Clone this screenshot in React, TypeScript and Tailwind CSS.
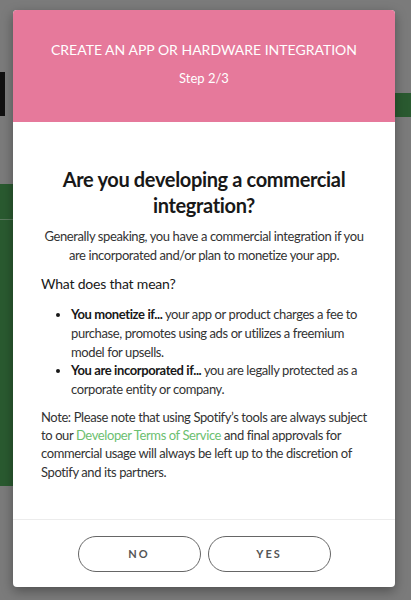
import React from 'react';

const App = () => {
  return (
    <div className="relative w-[411px] h-[600px] overflow-hidden bg-[#7b7b7b] font-['Lato',sans-serif]">
      {/* backdrop page bits */}
      <div className="absolute left-0 top-[72px] w-[5px] h-[44px] bg-[#111]" />
      <div className="absolute left-0 top-[184px] w-[14px] h-[302px] bg-[#2a5a30]">
        <div className="mt-[35px] h-px bg-[#5a7a5e]" />
      </div>
      <div className="absolute right-0 top-[93px] w-[16px] h-[24px] bg-[#2a5a30]" />

      {/* modal */}
      <div className="absolute left-[13px] top-[10px] w-[382px] bg-white rounded-[4px] overflow-hidden shadow-[0_4px_12px_rgba(0,0,0,0.35)]">
        <div className="bg-[#e6799b] text-white text-center pt-[30px] pb-[35px]">
          <div className="text-[14px] leading-[20px]">CREATE AN APP OR HARDWARE INTEGRATION</div>
          <div className="mt-[9px] text-[13px] leading-[18px]">Step 2/3</div>
        </div>

        <div className="px-[28px] pt-[44px] pb-[38px] text-[#333] tracking-[-0.4px]">
          <h2 className="text-center text-[20px] leading-[26px] font-bold tracking-[-0.35px] text-[#181818]">
            Are you developing a commercial integration?
          </h2>
          <p className="mt-[9px] text-center text-[13px] leading-[19px]">
            Generally speaking, you have a commercial integration if you are incorporated and/or plan to monetize your app.
          </p>
          <div className="mt-[9px] text-[14px] leading-[20px] tracking-[-0.2px] text-[#181818]">What does that mean?</div>
          <ul className="mt-[11px] pl-[30px] list-disc text-[13px] leading-[18.75px] marker:text-[#181818]">
            <li>
              <b className="text-[#181818]">You monetize if...</b> your app or product charges a fee to purchase, promotes using ads or utilizes a freemium model for upsells.
            </li>
            <li>
              <b className="text-[#181818]">You are incorporated if...</b> you are legally protected as a corporate entity or company.
            </li>
          </ul>
          <p className="mt-[9px] text-[13px] leading-[18.3px]">
            Note: Please note that using Spotify’s tools are always subject to our{' '}
            <a className="text-[#6cc070]">Developer Terms of Service</a> and final approvals for commercial usage will always be left up to the discretion of Spotify and its partners.
          </p>
        </div>

        <div className="border-t border-[#ececec] pt-[16px] pb-[15px] flex justify-center gap-[7px]">
          <button className="w-[123px] h-[36px] rounded-full border-[1.5px] border-[#666] text-[#555] text-[11px] font-bold tracking-[2px]">NO</button>
          <button className="w-[123px] h-[36px] rounded-full border-[1.5px] border-[#666] text-[#555] text-[11px] font-bold tracking-[2px]">YES</button>
        </div>
      </div>
    </div>
  );
};

export default App;
